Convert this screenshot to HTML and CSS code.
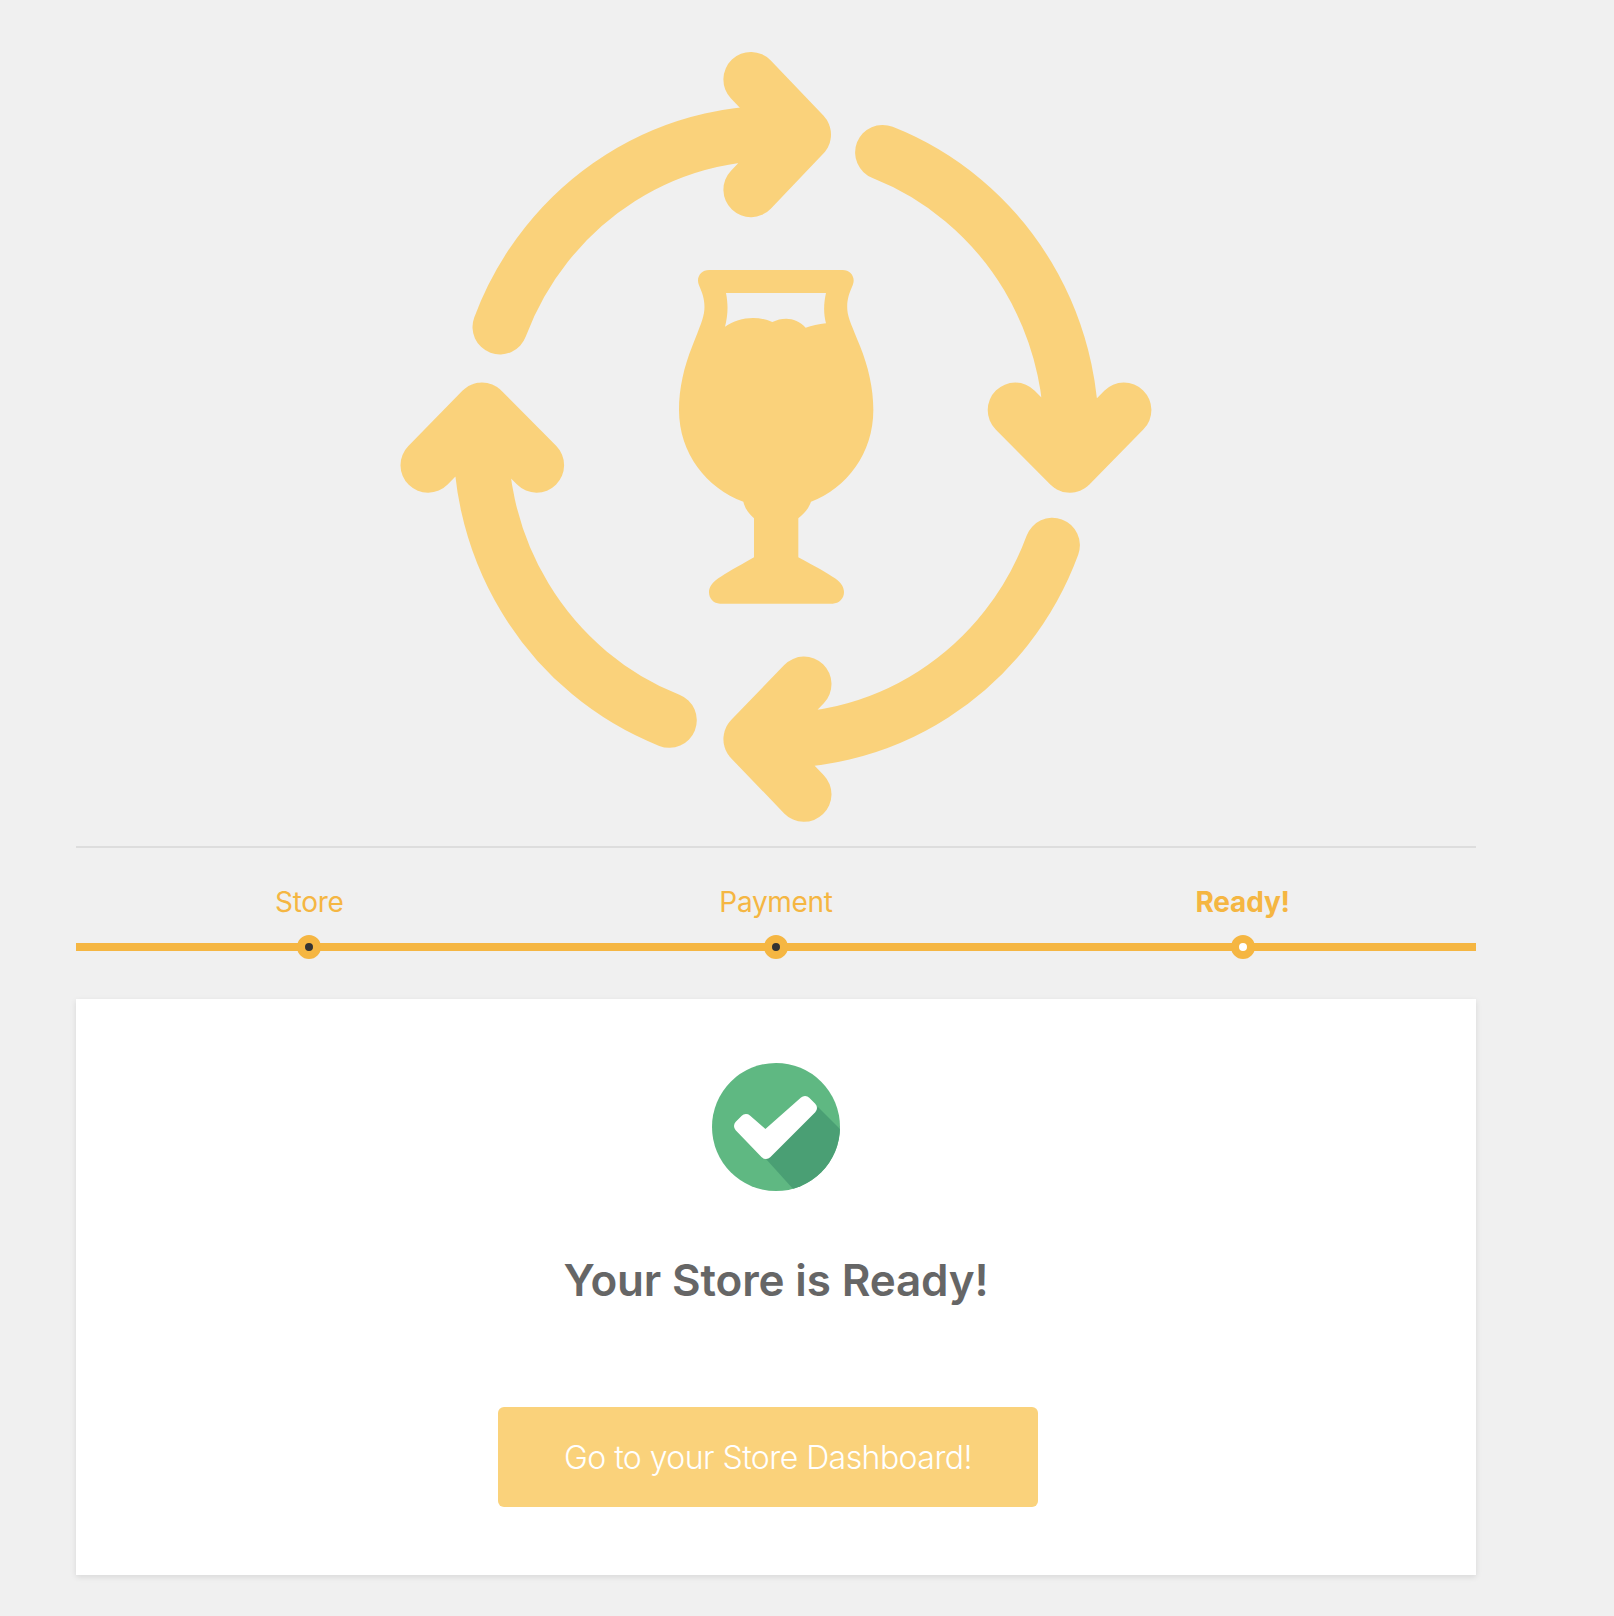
FILE: index.html
```html
<!DOCTYPE html>
<html lang="en">
<head>
<meta charset="utf-8">
<title>Your Store is Ready!</title>
<link rel="stylesheet" href="styles.css">
</head>
<body>
<main class="page">
  <div class="hero">
    <svg class="hero-icon" viewBox="380 30 792 816" width="792" height="816" aria-hidden="true">
      <g class="cycle">
        <path d="M500 327 A294 302 0 0 1 803.5 134.6 M750.9 79.5 L803.5 134.6 L750.9 189.7"/>
        <path d="M882.6 152.4 A294 302 0 0 1 1069.8 465.2 M1015.2 410.1 L1069.8 465.2 L1123.9 410.1"/>
        <path d="M1052.4 545.3 A294 302 0 0 1 750.9 739.2 M804 684.1 L750.9 739.2 L804 794.3"/>
        <path d="M669.3 720.3 A294 302 0 0 1 482 410.1 M428 465.2 L482 410.1 L536.6 465.2"/>
      </g>
      <g transform="translate(660 260) scale(.33333)">
        <path class="glass" fill-rule="evenodd" d="M147 30 H548 C572 30 588 52 578 76 C566 104 560 122 562 150 C564 175 578 202 600 258 C625 320 640 385 640 450 C640 580 560 685 453 725 C446 745 434 760 415 775 V892 C470 922 500 938 525 955 C545 970 552 982 552 997 C552 1016 537 1031 518 1031 H180 C161 1031 147 1016 147 997 C147 982 155 970 175 955 C200 938 230 922 282 892 V775 C265 760 255 745 250 725 C140 685 57 580 57 450 C57 385 72 320 97 258 C119 202 131 175 133 150 C135 122 129 104 117 76 C107 52 123 30 147 30 Z M198 99 H498 C491 130 490 160 498 190 C475 192 455 197 437 203 C410 172 370 170 337 186 C290 165 235 172 195 200 C204 165 205 135 198 99 Z"/>
      </g>
    </svg>
  </div>

  <ol class="steps">
    <li class="step"><span class="step-label">Store</span><span class="step-dot"></span></li>
    <li class="step"><span class="step-label">Payment</span><span class="step-dot"></span></li>
    <li class="step step-current"><span class="step-label">Ready!</span><span class="step-dot"></span></li>
  </ol>

  <section class="card">
    <svg class="ok-icon" viewBox="0 0 128 128" width="128" height="128" aria-hidden="true">
      <defs><clipPath id="ok-clip"><circle cx="64" cy="64" r="64"/></clipPath></defs>
      <g clip-path="url(#ok-clip)">
        <rect class="ok-bg" width="128" height="128"/>
        <path class="ok-shade" d="M54 96 L106 44 L190 128 L130 180 Z"/>
      </g>
      <path class="ok-check" d="M28 63 L34 57 L53.5 74 L93 39 L99 45 L54 90 Z"/>
    </svg>
    <h1 class="title">Your Store is Ready!</h1>
    <a class="cta" href="#">Go to your Store Dashboard!</a>
  </section>
</main>
</body>
</html>
```
FILE: styles.css
```css
* { box-sizing: border-box; }
html, body { margin: 0; }
body {
  min-height: 1616px;
  background: #f0f0f0;
  font-family: Inter, "Liberation Sans", sans-serif;
  padding: 0 138px 41px 76px;
}
.page { width: 1400px; }
.hero { height: 846px; display: flex; padding-top: 30px; justify-content: center; }
.hero-icon { display: block; }
.cycle path { fill: none; stroke: #fad27b; stroke-width: 55; stroke-linecap: round; stroke-linejoin: round; }
.glass { fill: #fad27b; }

.steps {
  list-style: none;
  margin: 0;
  padding: 0;
  border-top: 2px solid #ddd;
  display: grid;
  grid-template-columns: repeat(3, 1fr);
  background: linear-gradient(#f5b642, #f5b642) 0 calc(100% - 8px) / 100% 8px no-repeat;
}
.step {
  display: flex;
  flex-direction: column;
  align-items: center;
  color: #f5b642;
}
.step-label {
  font-size: 28px;
  line-height: 32px;
  letter-spacing: -.3px;
  margin-top: 38px;
  margin-bottom: 17px;
}
.step-current .step-label { font-weight: 700; letter-spacing: -.2px; }
.step-dot {
  width: 24px;
  height: 24px;
  border-radius: 50%;
  border: 8px solid #f5b642;
  background: #333;
}
.step-current .step-dot { background: #fff; }

.card {
  margin-top: 40px;
  height: 576px;
  background: #fff;
  box-shadow: 0 2px 6px rgba(0, 0, 0, .1);
  padding-top: 64px;
  display: flex;
  flex-direction: column;
  align-items: center;
}
.ok-icon { display: block; }
.ok-bg { fill: #5fb882; }
.ok-shade { fill: #4a9f74; }
.ok-check { fill: #fff; stroke: #fff; stroke-width: 12; stroke-linejoin: round; }
.title {
  margin: 61px 0 0;
  font-size: 44px;
  line-height: 56px;
  font-weight: 600;
  color: #666;
  letter-spacing: -.15px;
}
.cta {
  margin-top: 99px;
  margin-right: 16px;
  width: 540px;
  height: 100px;
  display: flex;
  align-items: center;
  justify-content: center;
  background: #fad27b;
  border-radius: 6px;
  color: #fff;
  font-size: 32px;
  font-weight: 300;
  letter-spacing: -.55px;
  text-decoration: none;
}
```
